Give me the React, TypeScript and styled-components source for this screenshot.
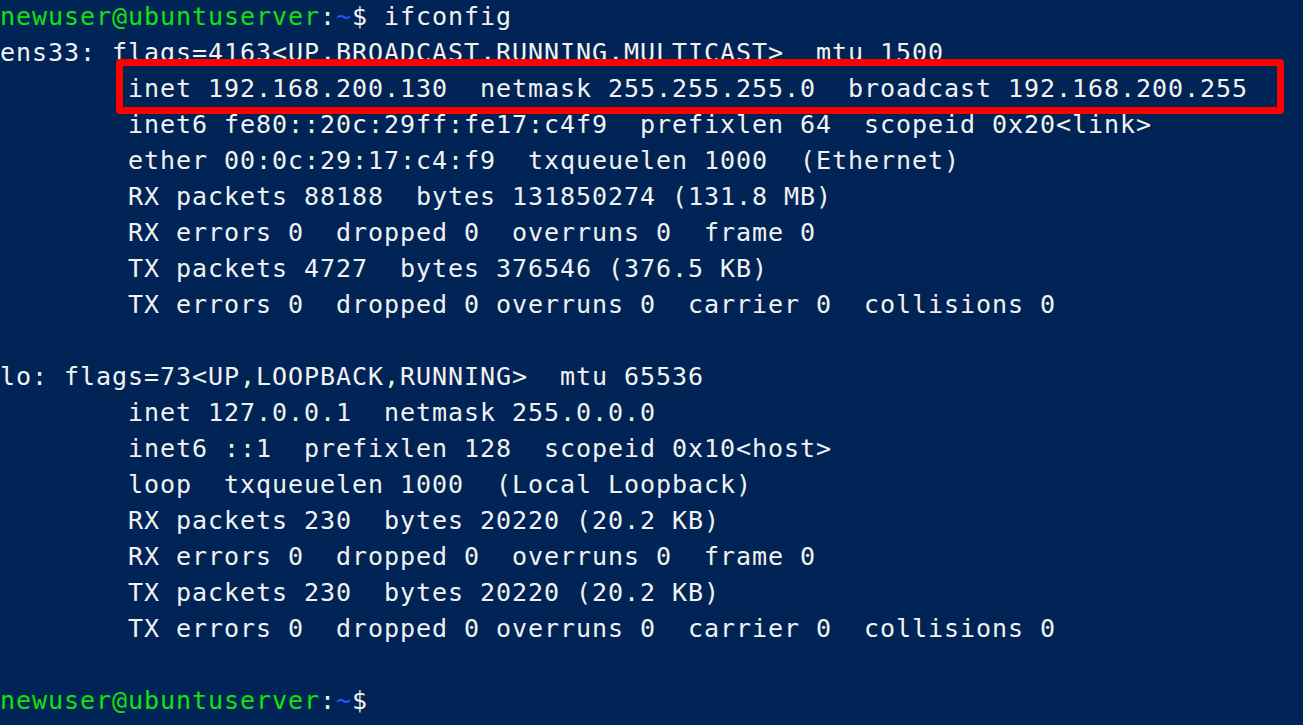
import React from "react";
import styled, { createGlobalStyle } from "styled-components";

const GlobalStyle = createGlobalStyle`
  html, body {
    margin: 0;
    padding: 0;
    background: #012456;
    height: 100%;
  }
  #root { min-height: 100%; }
`;

const Screen = styled.div`
  box-sizing: border-box;
  width: 1303px;
  height: 725px;
  overflow: hidden;
  background: #012456;
  color: #f2f2f2;
  font-family: "DejaVu Sans Mono", "Liberation Mono", monospace;
  font-size: 25px;
  letter-spacing: 0.95px;
  line-height: 36px;
`;

const Output = styled.div`
  margin-top: -1px;
  display: flex;
  flex-direction: column;
`;

const Line = styled.div`
  height: 36px;
  white-space: pre;
`;

const User = styled.span`
  color: #16e012;
`;

const Path = styled.span`
  color: #2c55ff;
`;

const Highlight = styled.span`
  position: relative;
  &::after {
    content: "";
    position: absolute;
    left: -12px;
    right: -36px;
    top: -15px;
    bottom: -11px;
    border: 7px solid #ff0000;
    border-radius: 4px;
    pointer-events: none;
  }
`;

const Prompt: React.FC<{ cmd?: string }> = ({ cmd }) => (
  <Line>
    <User>newuser@ubuntuserver</User>:<Path>~</Path>${cmd ? ` ${cmd}` : ""}
  </Line>
);

const ens33 = [
  "ens33: flags=4163<UP,BROADCAST,RUNNING,MULTICAST>  mtu 1500",
];
const ens33Rest = [
  "        inet6 fe80::20c:29ff:fe17:c4f9  prefixlen 64  scopeid 0x20<link>",
  "        ether 00:0c:29:17:c4:f9  txqueuelen 1000  (Ethernet)",
  "        RX packets 88188  bytes 131850274 (131.8 MB)",
  "        RX errors 0  dropped 0  overruns 0  frame 0",
  "        TX packets 4727  bytes 376546 (376.5 KB)",
  "        TX errors 0  dropped 0 overruns 0  carrier 0  collisions 0",
  "",
  "lo: flags=73<UP,LOOPBACK,RUNNING>  mtu 65536",
  "        inet 127.0.0.1  netmask 255.0.0.0",
  "        inet6 ::1  prefixlen 128  scopeid 0x10<host>",
  "        loop  txqueuelen 1000  (Local Loopback)",
  "        RX packets 230  bytes 20220 (20.2 KB)",
  "        RX errors 0  dropped 0  overruns 0  frame 0",
  "        TX packets 230  bytes 20220 (20.2 KB)",
  "        TX errors 0  dropped 0 overruns 0  carrier 0  collisions 0",
  "",
];

export default function App() {
  return (
    <>
      <GlobalStyle />
      <Screen>
        <Output>
          <Prompt cmd="ifconfig" />
          {ens33.map((l, i) => (
            <Line key={`a${i}`}>{l}</Line>
          ))}
          <Line>
            {"        "}
            <Highlight>inet 192.168.200.130  netmask 255.255.255.0  broadcast 192.168.200.255</Highlight>
          </Line>
          {ens33Rest.map((l, i) => (
            <Line key={`b${i}`}>{l}</Line>
          ))}
          <Prompt />
        </Output>
      </Screen>
    </>
  );
}
